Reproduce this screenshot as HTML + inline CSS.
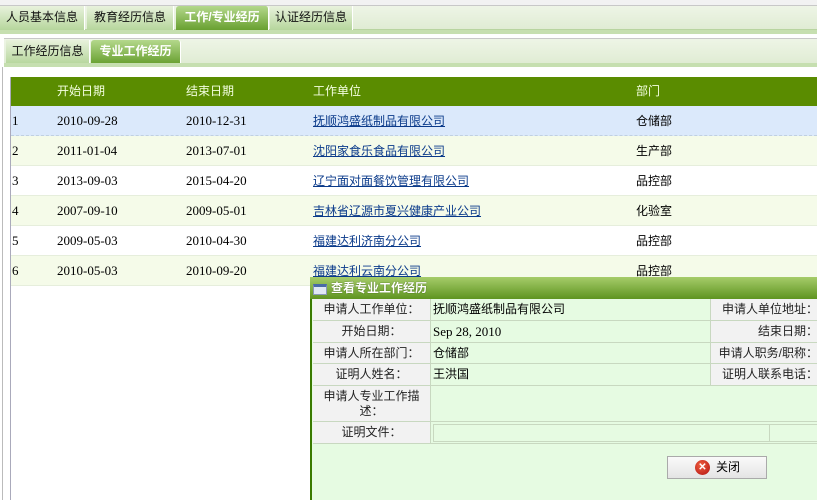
<!DOCTYPE html>
<html><head><meta charset="utf-8"><style>
*{margin:0;padding:0;box-sizing:border-box}
body{width:817px;height:500px;overflow:hidden;background:#fff;font-family:"Liberation Sans","Noto Sans CJK SC","WenQuanYi Zen Hei",sans-serif;font-size:12px;color:#000;position:relative}
.abs{position:absolute}
.sf{font-family:"Liberation Serif","Noto Sans CJK SC",serif;font-size:13px}
.bar{left:0;width:817px;background:linear-gradient(#eef5e6,#e0ecd4);border-top:1px solid #c8c8c8;border-bottom:1px solid #b8d4a0}
.tab{position:absolute;height:24px;line-height:23px;text-align:center;font-size:12px;background:linear-gradient(#e8f2dc,#b6d69c);color:#111;border-right:1px solid #fff}
.tab.on{background:linear-gradient(#b4d88c,#68a030);color:#fff;font-weight:bold;border-radius:3px 3px 0 0}
.line{left:0;width:817px;height:4px;background:#c6dfb0}
.row{position:absolute;left:11px;width:806px;height:30px;line-height:30px;border-bottom:1px solid #e6eedc}
.row span{position:absolute}
.row a{color:#0a3a8a;text-decoration:underline}
.c0{left:1px}.c1{left:46px}.c2{left:175px}.c3{left:302px}.c4{left:625px}
.c0,.c1,.c2{font-family:"Liberation Serif",serif;font-size:13px}
.fr{position:absolute;left:313px;width:504px;border-bottom:1px solid #c8d8c0}
.lb{position:absolute;left:0;width:118px;background:#f2f2f2;text-align:center;border-right:1px solid #c8d8c0;color:#222}
.vl{position:absolute;left:120px}
.lb2{position:absolute;left:397px;width:110px;background:#f2f2f2;text-align:right;border-left:1px solid #c8d8c0;padding-right:2px;color:#222}
</style></head><body>
<div class="abs" style="left:0;top:0;width:817px;height:6px;background:#f2f2f2"></div>
<div class="abs bar" style="top:5px;height:25px"></div>
<div class="tab" style="left:0;top:6px;width:85px">人员基本信息</div>
<div class="tab" style="left:87px;top:6px;width:87px">教育经历信息</div>
<div class="tab on" style="left:176px;top:6px;width:93px">工作/专业经历</div>
<div class="tab" style="left:270px;top:6px;width:83px">认证经历信息</div>
<div class="abs line" style="top:30px"></div>
<div class="abs bar" style="top:38px;height:26px;left:4px;width:813px"></div>
<div class="tab" style="left:6px;top:40px;width:84px">工作经历信息</div>
<div class="tab on" style="left:91px;top:40px;width:90px">专业工作经历</div>
<div class="abs" style="left:4px;top:63px;width:813px;height:4px;background:#c6dfb0"></div>
<div class="abs" style="left:2px;top:67px;width:1px;height:433px;background:#bbb"></div>
<div class="abs" style="left:10px;top:77px;width:1px;height:423px;background:#aab"></div>
<div class="abs" style="left:11px;top:77px;width:806px;height:29px;background:#5a8c00;color:#f4ffe0;line-height:29px">
<span class="abs" style="left:46px">开始日期</span><span class="abs" style="left:175px">结束日期</span><span class="abs" style="left:302px">工作单位</span><span class="abs" style="left:625px">部门</span></div>
<div class="row" style="top:106px;background:#dbe9fb;border-bottom:1px dashed #c0d0e0"><span class="c0">1</span><span class="c1">2010-09-28</span><span class="c2">2010-12-31</span><span class="c3"><a>抚顺鸿盛纸制品有限公司</a></span><span class="c4">仓储部</span></div>
<div class="row" style="top:136px;background:#f5fbe9"><span class="c0">2</span><span class="c1">2011-01-04</span><span class="c2">2013-07-01</span><span class="c3"><a>沈阳家食乐食品有限公司</a></span><span class="c4">生产部</span></div>
<div class="row" style="top:166px;background:#fff"><span class="c0">3</span><span class="c1">2013-09-03</span><span class="c2">2015-04-20</span><span class="c3"><a>辽宁面对面餐饮管理有限公司</a></span><span class="c4">品控部</span></div>
<div class="row" style="top:196px;background:#f5fbe9"><span class="c0">4</span><span class="c1">2007-09-10</span><span class="c2">2009-05-01</span><span class="c3"><a>吉林省辽源市夏兴健康产业公司</a></span><span class="c4">化验室</span></div>
<div class="row" style="top:226px;background:#fff"><span class="c0">5</span><span class="c1">2009-05-03</span><span class="c2">2010-04-30</span><span class="c3"><a>福建达利济南分公司</a></span><span class="c4">品控部</span></div>
<div class="row" style="top:256px;background:#f5fbe9"><span class="c0">6</span><span class="c1">2010-05-03</span><span class="c2">2010-09-20</span><span class="c3"><a>福建达利云南分公司</a></span><span class="c4">品控部</span></div>

<div class="abs" style="left:310px;top:277px;width:507px;height:223px;background:#e6fbe2;border-left:2px solid #3a7a00"></div>
<div class="abs" style="left:310px;top:277px;width:507px;height:22px;background:linear-gradient(#a6cc6a,#5e9420);color:#fff;font-weight:bold;line-height:22px;padding-left:21px;font-size:12px;text-shadow:0 0 1px #2a4a00">查看专业工作经历</div>
<div class="abs" style="left:313px;top:284px;width:14px;height:11px;background:#e0e8f4;border:1px solid #8898b8;border-top:3px solid #4a6aa8"></div>
<div class="fr" style="top:299px;height:22px;line-height:21px"><div class="lb" style="height:21px">申请人工作单位：</div><div class="vl">抚顺鸿盛纸制品有限公司</div><div class="lb2" style="height:21px">申请人单位地址：</div></div>
<div class="fr" style="top:321px;height:22px;line-height:21px"><div class="lb" style="height:21px">开始日期：</div><div class="vl sf">Sep 28, 2010</div><div class="lb2" style="height:21px">结束日期：</div></div>
<div class="fr" style="top:343px;height:21px;line-height:20px"><div class="lb" style="height:20px">申请人所在部门：</div><div class="vl">仓储部</div><div class="lb2" style="height:20px">申请人职务/职称：</div></div>
<div class="fr" style="top:364px;height:22px;line-height:21px"><div class="lb" style="height:21px">证明人姓名：</div><div class="vl">王洪国</div><div class="lb2" style="height:21px">证明人联系电话：</div></div>
<div class="fr" style="top:386px;height:36px;line-height:15px"><div class="lb" style="height:35px;padding:3px 6px 0">申请人专业工作描述：</div></div>
<div class="fr" style="top:422px;height:22px;line-height:21px"><div class="lb" style="height:21px">证明文件：</div><div class="abs" style="left:120px;top:2px;width:337px;height:18px;border:1px solid #c8d8c0"></div><div class="abs" style="left:456px;top:2px;width:60px;height:18px;border:1px solid #c8d8c0"></div></div>
<div class="abs" style="left:667px;top:456px;width:100px;height:23px;background:linear-gradient(#fafafa,#e4e4e4);border:1px solid #aaa;line-height:21px;font-size:12px">
<span class="abs" style="left:27px;top:3px;width:15px;height:15px;border-radius:50%;background:radial-gradient(circle at 40% 35%,#f06040,#b01010);color:#fff;font-size:10px;line-height:15px;text-align:center;font-weight:bold">✕</span>
<span class="abs" style="left:48px">关闭</span></div>
</body></html>
